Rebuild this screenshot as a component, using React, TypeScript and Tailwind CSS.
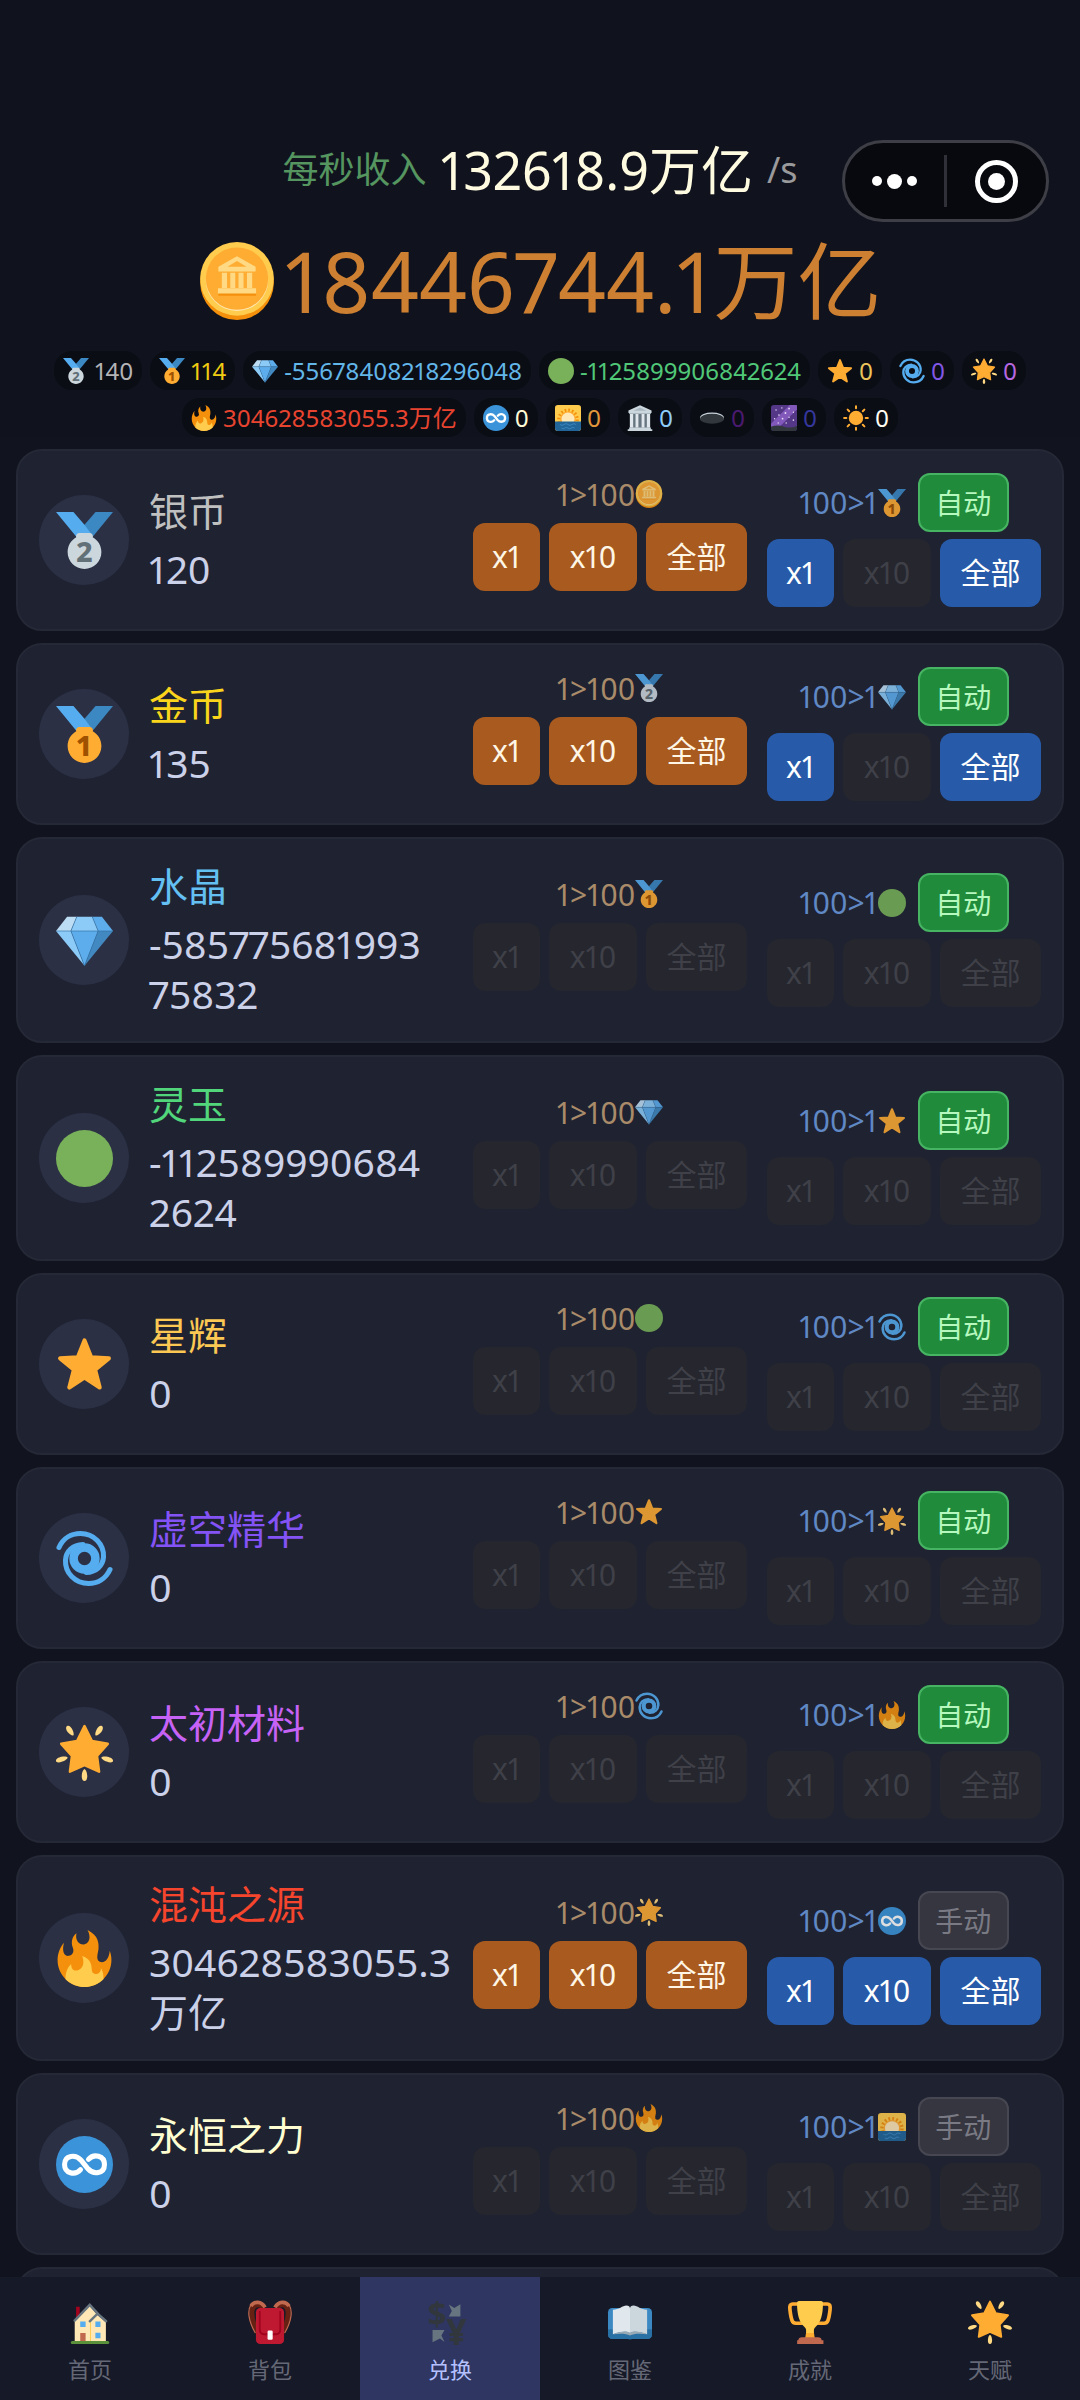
import type { ReactNode } from "react";

type IconName =
  | "coin" | "silver" | "gold" | "gem" | "jade" | "star" | "cyclone" | "glow" | "fire"
  | "infinity" | "sunrise" | "temple" | "hole" | "galaxy" | "sun"
  | "house" | "backpack" | "exchange" | "book" | "trophy";

const medal = (face: string, ink: string, n: string) => (
  <>
    <path fill="#55ACEE" d="M18 8l-7-8H0l14 17 11.521-4.75z" />
    <path fill="#3B88C3" d="M25 0l-7 8 5.39 7.312 1.227-1.489L36 0z" />
    <path
      fill={face}
      d="M23.205 16.026c.08-.217.131-.448.131-.693 0-1.104-.896-2-2-2h-6.667c-1.104 0-2 .896-2 2 0 .245.05.476.131.693-3.258 1.826-5.464 5.307-5.464 9.307C7.335 31.224 12.111 36 18.002 36s10.667-4.776 10.667-10.667c0-4-2.206-7.481-5.464-9.307z"
    />
    <text x="18" y="31.500" textAnchor="middle" fontSize="18" fontWeight="800" fill={ink}>{n}</text>
  </>
);

const drawings: Record<IconName, ReactNode> = {
  coin: (
    <>
      <ellipse cx="18" cy="18.6" rx="17" ry="17.4" fill="#F4900C" />
      <ellipse cx="18" cy="17" rx="17" ry="17" fill="#FFCC4D" />
      <circle cx="18" cy="17.4" r="14.4" fill="#FFE8B6" />
      <circle cx="18" cy="16.9" r="14.4" fill="#FFAC33" />
      <path fill="#F4900C" d="M9.4 23.4h17.4v1.4H9.4z" />
      <path fill="#FFD983" d="M18 6.6l8.6 4.8v2.2H9.4v-2.2zM11 14.2h2.4v7H11zm3.9 0h2.3v7h-2.3zm3.8 0H21v7h-2.3zm3.9 0H25v7h-2.4zM9.2 21.4h17.6v2.4H9.2z" />
      <path fill="#FFAC33" d="M18 8.8l4.4 2.6h-8.8z" />
    </>
  ),
  silver: medal("#CCD6DD", "#627077", "2"),
  gold: medal("#FFAC33", "#9E5200", "1"),
  gem: (
    <>
      <path fill="#BDDDF4" d="M7 3h6.1L9.4 12H0z" />
      <path fill="#5DADEC" d="M36 12L29 3h-6.1l3.7 9z" />
      <path fill="#4289C1" d="M26.6 12L18 34l18-22z" />
      <path fill="#8CCAF7" d="M9.4 12L18 34 0 12zM22.9 3h-9.8L9.4 12h17.2z" />
      <path fill="#5DADEC" d="M9.4 12L18 34l8.6-22z" />
      <path fill="none" stroke="#2F6FA3" strokeWidth=".4" d="M0 12h36M13.1 3L9.4 12 18 34l8.6-22-3.7-9" />
    </>
  ),
  jade: <circle cx="18" cy="18" r="18" fill="#78B159" />,
  star: (
    <path
      fill="#FFAC33" stroke="#FFAC33" strokeWidth="2.6" strokeLinejoin="round"
      d="M18 2.8l4.2 10.6 11.2.7-8.7 7.2 2.9 11.2L18 26.2l-9.6 6.3 2.9-11.2-8.7-7.2 11.2-.7z"
    />
  ),
  cyclone: (
    <g fill="none" stroke="#55ACEE" strokeLinecap="round" strokeWidth="3.2">
      <circle cx="18" cy="18" r="6.9" strokeWidth="5.4" />
      <path d="M1.9 11C4.6 5 10 2.2 15.4 2.2 24 2.2 30.4 9 30 17c-.3 5.4-4.6 9.6-11 9.8" />
      <path d="M34.1 25C31.4 31 26 33.8 20.6 33.8 12 33.8 5.6 27 6 19c.3-5.4 4.6-9.6 11-9.8" />
    </g>
  ),
  glow: (
    <>
      <path
        fill="#FFAC33" stroke="#FFAC33" strokeWidth="1.6" strokeLinejoin="round"
        d="M18 1.300l4.700 9.500 10 1.700-6.800 7.700 1.300 9.900L18 26l-9.200 4.100 1.300-9.900-6.800-7.700 10-1.700z"
      />
      <g fill="#FFD983">
        <path d="M7 1.200c1.300-.6 2.700.9 3.400 2.500.7 1.500 1 3 .6 3.500-.7.5-2.300-.6-3.500-2-1-1.300-1.700-3.300-.5-4z" />
        <path d="M29 1.200c-1.300-.6-2.700.9-3.400 2.500-.7 1.500-1 3-.6 3.500.7.5 2.300-.6 3.500-2 1-1.300 1.700-3.300.5-4z" />
        <path d="M0 23.400c-.2-1.300 1.600-2.300 3.400-2.700 1.800-.4 3.600-.2 3.900.4.2.8-1.500 1.900-3.300 2.600-1.800.7-3.700.9-4-.3z" />
        <path d="M36 23.400c.2-1.300-1.600-2.300-3.400-2.700-1.800-.4-3.600-.2-3.900.4-.2.800 1.500 1.900 3.300 2.600 1.800.7 3.700.9 4-.3z" />
        <path d="M18 36c-1.300 0-1.900-1.800-1.700-3.700.2-2 1-3.700 1.700-3.700s1.500 1.700 1.700 3.700c.2 1.900-.4 3.700-1.700 3.700z" />
      </g>
    </>
  ),
  fire: (
    <>
      <path fill="#F4900C" d="M35 19c0-2.062-.367-4.039-1.04-5.868-.46 5.389-3.333 8.157-6.335 6.868-2.812-1.208-.917-5.917-.777-8.164.236-3.809-.012-8.169-6.931-11.794 2.875 5.500.333 8.917-2.333 9.125-2.958.231-5.667-2.542-4.667-7.042-3.238 2.386-3.332 6.402-2.333 9 1.042 2.708-.042 4.958-2.583 5.208-2.840.280-4.418-3.041-2.963-8.333C2.520 10.965 1 14.805 1 19c0 9.389 7.611 17 17 17s17-7.611 17-17z" />
      <path fill="#FFCC4D" d="M28.394 23.999c.148 3.084-2.561 4.293-4.019 3.709-2.106-.843-1.541-2.291-2.083-5.291s-2.625-5.083-5.708-6c2.250 6.333-1.247 8.667-3.080 9.084-1.872.426-3.753-.001-3.968-4.007C7.352 23.668 6 26.676 6 30c0 .368.023.730.055 1.090C9.125 34.124 13.342 36 18 36s8.875-1.876 11.945-4.910c.032-.360.055-.722.055-1.090 0-2.187-.584-4.236-1.606-6.001z" />
    </>
  ),
  infinity: (
    <>
      <circle cx="18" cy="18" r="18" fill="#3B94D9" />
      <path
        fill="none" stroke="#fff" strokeWidth="3.2" strokeLinecap="round"
        d="M15.500 21.200C12 25.200 5.400 23.600 5.400 18c0-6 7-6.600 10.400-2.700l4.400 5.400C23.600 24.600 30.600 24 30.600 18c0-5.600-6.600-7.200-10.100-3.200"
      />
    </>
  ),
  sunrise: (
    <>
      <rect width="36" height="36" rx="4" fill="#FFCC4D" />
      <circle cx="18" cy="20" r="12.500" fill="none" stroke="#F4900C" strokeWidth="5" strokeDasharray="2.200 2.709" />
      <circle cx="18" cy="20" r="11" fill="#FFAC33" />
      <circle cx="18" cy="19.500" r="9" fill="#FFE8B6" />
      <path fill="#269" d="M0 23h36v9a4 4 0 0 1-4 4H4a4 4 0 0 1-4-4z" />
      <path fill="none" stroke="#3B88C3" strokeWidth="1.300" d="M7 27q2.750 2.500 5.500 0t5.500 0 5.500 0 5.500 0M9 32q2.250 2.200 4.500 0t4.500 0 4.500 0 4.500 0" />
    </>
  ),
  temple: (
    <>
      <path fill="#66757F" d="M4 10h28v22H4z" />
      <path fill="#CCD6DD" d="M18 .5L34 7.500V11H2V7.500zM1 33.500h34V36H1zM3 31h30v2.500H3z" />
      <path fill="#AAB8C2" d="M18 3.500L27 8H9zM3 11h30v1.500H3z" />
      <path fill="#E1E8ED" d="M4 12.500h4.500V31H4zm7.800 0h4V31h-4zm8.400 0h4V31h-4zm7.300 0H32V31h-4.500z" />
    </>
  ),
  hole: (
    <>
      <ellipse cx="18" cy="17.500" rx="16.500" ry="7" fill="#CCD6DD" />
      <ellipse cx="18" cy="19" rx="16.500" ry="7" fill="#31373D" />
    </>
  ),
  galaxy: (
    <>
      <rect width="36" height="36" rx="4" fill="#553788" />
      <path fill="#9266CC" d="M0 26L26 0h10v6L12 30H0z" opacity=".75" />
      <path fill="#31373D" d="M0 30q9-3 18 0t18-1v3a4 4 0 0 1-4 4H4a4 4 0 0 1-4-4z" />
      <g fill="#E6DCF7">
        <circle cx="7" cy="7" r="1" /><circle cx="15" cy="4" r="1" /><circle cx="25" cy="5" r="1.200" />
        <circle cx="31" cy="10" r="1" /><circle cx="20" cy="11" r="1.300" /><circle cx="11" cy="14" r="1.100" />
        <circle cx="5" cy="19" r="1" /><circle cx="16" cy="19" r="1.200" /><circle cx="25" cy="17" r="1" />
        <circle cx="31" cy="21" r="1.100" /><circle cx="10" cy="25" r="1" /><circle cx="21" cy="25" r="1" />
      </g>
    </>
  ),
  sun: (
    <>
      <circle cx="18" cy="18" r="10" fill="#FFAC33" />
      <path
        stroke="#FFAC33" strokeWidth="2.800" strokeLinecap="round"
        d="M18 1.600v3M18 31.400v3M1.600 18h3M31.400 18h3M6.400 6.400l2.200 2.200M27.400 27.400l2.200 2.200M6.400 29.600l2.200-2.200M27.400 8.600l2.200-2.200"
      />
    </>
  ),
  house: (
    <>
      <path fill="#A0041E" d="M6.600 5.500h3V15h-3z" />
      <path fill="#FFE8B6" d="M5.500 16.500L17.800 4.500l6 7.500 7.200 6v16H5.500z" />
      <path fill="none" stroke="#FFCC4D" strokeWidth=".8" d="M18.400 17v17" />
      <path fill="none" stroke="#66757F" strokeWidth="2" strokeLinecap="round" d="M5.400 16.800L17.800 4l7.500 8.200M17.800 17.400l6.400-6.200 7 6.200" />
      <path fill="#55ACEE" d="M10 17.500h4.400V22H10zM22.400 17.500h4.200V22h-4.200zM22.400 26.800h4.200v4.400h-4.200z" />
      <path fill="#C1694F" d="M10 27h4.400v7H10z" />
      <path fill="#5C913B" d="M3.500 33.500h29a1 1 0 0 1 0 2.500h-29a1 1 0 0 1 0-2.500z" />
    </>
  ),
  backpack: (
    <>
      <path fill="none" stroke="#662113" strokeWidth="4" d="M13 6C6 1 3 6 3.200 11c.1 6 2.300 11 5 16M23 6c7-5 10 0 9.800 5-.1 6-2.300 11-5 16" />
      <path fill="none" stroke="#C1694F" strokeWidth="3" d="M14 6C11 .800 5 .600 2.400 5M22 6c3-5.200 9-5.400 11.600-1" />
      <path fill="none" stroke="#C1694F" strokeWidth="1" d="M2.400 4C-1 9 .800 18 6 27M33.600 4C37 9 35.200 18 30 27" />
      <rect x="6.500" y="6.500" width="23" height="29.500" rx="3.500" fill="#BE1931" />
      <path fill="none" stroke="#A0041E" strokeWidth="1.500" d="M9.600 9v15c0 3 1 4 3.500 4h9.800c2.500 0 3.500-1 3.500-4V9" />
      <rect x="16" y="25" width="4.200" height="7.500" rx="1" fill="#fff" />
    </>
  ),
  exchange: (
    <>
      <text x="7.500" y="21" textAnchor="middle" fontSize="27" fontWeight="700" fill="#31373D">$</text>
      <text x="23.500" y="37" textAnchor="middle" fontSize="29" fontWeight="700" fill="#31373D">¥</text>
      <path fill="#66757F" d="M17 3.600l4.500 2.900 5-3.100v10.100H17L19.500 9zM13.500 34.400l-3.700-3-6.100 3.100v-10h9.800L11 29z" />
    </>
  ),
  book: (
    <>
      <rect x="0" y="6.500" width="36" height="25.500" rx="3.500" fill="#3B88C3" />
      <path fill="#269" d="M0 24v4.500A3.500 3.500 0 0 0 3.500 32h12.700q1.800 1.200 3.600 0h12.700a3.500 3.500 0 0 0 3.500-3.500V24z" opacity=".7" />
      <path fill="#E1E8ED" d="M4 8C9 8 12 4.500 15 4.500c2 0 3 1 3 2.500v20c-3-2-9-1-14 1z" />
      <path fill="#CCD6DD" d="M32 8c-5 0-8-3.500-11-3.500-2 0-3 1-3 2.500v20c3-2 9-1 14 1z" />
      <path fill="#99AAB5" d="M4 28c5-2 11-3.200 14-1 3-2.200 9-1 14 1-5-.6-11-.8-14 1-3-1.800-9-1.600-14-1z" />
    </>
  ),
  trophy: (
    <>
      <path fill="none" stroke="#FFAC33" strokeWidth="3" d="M9 3.300H4C1.500 3.300 1.300 5 1.600 8c.5 4.500 1 7 1.800 9 .6 1.500 1.500 2 3 2h6M27 3.300h5c2.500 0 2.700 1.700 2.400 4.700-.5 4.500-1 7-1.800 9-.6 1.500-1.500 2-3 2h-6" />
      <path fill="#FFAC33" d="M15.500 22h5l1.500 10h-8z" />
      <path fill="#FFCC4D" d="M9 .800h18c1 0 1.600.7 1.600 1.700C28.600 12 27 18 22.500 22c-1.500 1.400-1.500 3-1.500 5h-6c0-2 0-3.600-1.500-5C9 18 7.400 12 7.400 2.500c0-1 .6-1.700 1.600-1.700z" />
      <path fill="#C1694F" d="M11.500 30.500h13c2 0 3 1 3 2.500H29v3H7.500v-3h1c0-1.500 1-2.500 3-2.500z" />
    </>
  ),
};

function Icon({ name, className }: { name: IconName; className: string }) {
  return (
    <svg viewBox="0 0 36 36" aria-hidden="true" className={`shrink-0 overflow-visible ${className}`}>
      {drawings[name]}
    </svg>
  );
}

const chips: { icon: IconName; value: string; color: string }[] = [
  { icon: "silver", value: "140", color: "text-[#b4b4b6]" },
  { icon: "gold", value: "114", color: "text-[#f0cc12]" },
  { icon: "gem", value: "-55678408218296048", color: "text-[#62b6e8]" },
  { icon: "jade", value: "-1125899906842624", color: "text-[#50c878]" },
  { icon: "star", value: "0", color: "text-[#eac45a]" },
  { icon: "cyclone", value: "0", color: "text-[#8157e6]" },
  { icon: "glow", value: "0", color: "text-[#b768e0]" },
  { icon: "fire", value: "304628583055.3万亿", color: "text-[#e8442f]" },
  { icon: "infinity", value: "0", color: "text-[#fffbd6]" },
  { icon: "sunrise", value: "0", color: "text-[#e2983a]" },
  { icon: "temple", value: "0", color: "text-[#8fcdf8]" },
  { icon: "hole", value: "0", color: "text-[#4a1a70]" },
  { icon: "galaxy", value: "0", color: "text-[#34379c]" },
  { icon: "sun", value: "0", color: "text-[#fffdf2]" },
];

type Flags = [boolean, boolean, boolean];
type Currency = {
  icon: IconName; name: string; color: string; value: ReactNode;
  down: IconName; downOn: Flags; up: IconName; upOn: Flags; auto: boolean;
};

const none: Flags = [false, false, false];
const all: Flags = [true, true, true];

const currencies: Currency[] = [
  { icon: "silver", name: "银币", color: "text-[#c0c0c0]", value: "120", down: "coin", downOn: all, up: "gold", upOn: [true, false, true], auto: true },
  { icon: "gold", name: "金币", color: "text-[#fad51c]", value: "135", down: "silver", downOn: all, up: "gem", upOn: [true, false, true], auto: true },
  { icon: "gem", name: "水晶", color: "text-[#64c0f2]", value: <>-585775681993<wbr />75832</>, down: "gold", downOn: none, up: "jade", upOn: none, auto: true },
  { icon: "jade", name: "灵玉", color: "text-[#52d67c]", value: <>-112589990684<wbr />2624</>, down: "gem", downOn: none, up: "star", upOn: none, auto: true },
  { icon: "star", name: "星辉", color: "text-[#fac853]", value: "0", down: "jade", downOn: none, up: "cyclone", upOn: none, auto: true },
  { icon: "cyclone", name: "虚空精华", color: "text-[#8453f5]", value: "0", down: "star", downOn: none, up: "glow", upOn: none, auto: true },
  { icon: "glow", name: "太初材料", color: "text-[#c662f5]", value: "0", down: "cyclone", downOn: none, up: "fire", upOn: none, auto: true },
  { icon: "fire", name: "混沌之源", color: "text-[#f5452d]", value: "304628583055.3万亿", down: "glow", downOn: all, up: "infinity", upOn: all, auto: false },
  { icon: "infinity", name: "永恒之力", color: "text-[#ffffd2]", value: "0", down: "fire", downOn: none, up: "sunrise", upOn: none, auto: false },
];

const amounts = [
  { label: "x1", width: "w-[67px]" },
  { label: "x10", width: "w-[88px]" },
  { label: "全部", width: "w-[101px]" },
];

function AmountButtons({ on, tone }: { on: Flags; tone: string }) {
  return (
    <div className="flex gap-[9px]">
      {amounts.map((a, i) => (
        <button
          key={a.label}
          type="button"
          disabled={!on[i]}
          className={`h-[68px] rounded-xl text-[30px] leading-[40px] ${a.width} ${on[i] ? tone : "bg-[#25262e] text-[#3f4048]"}`}
        >
          {a.label}
        </button>
      ))}
    </div>
  );
}

function CurrencyCard({ c }: { c: Currency }) {
  return (
    <li className="flex shrink-0 items-center rounded-[26px] border-2 border-[#252836] bg-[#1f2231] px-[21px] py-[22px]">
      <div className="grid size-[90px] shrink-0 place-items-center rounded-full bg-[#2c3045]">
        <Icon name={c.icon} className="size-[57px]" />
      </div>
      <div className="ml-[20px] min-w-0 flex-1 pr-4">
        <h2 className={`text-[39px] leading-[50px] ${c.color}`}>{c.name}</h2>
        <p className="mt-2 text-[39px] leading-[50px] break-words text-[#cbd1e8]">{c.value}</p>
      </div>
      <div className="flex shrink-0 gap-[20px]">
        <div className="flex flex-col items-center gap-2">
          <div className="flex h-[42px] items-center text-[30px] text-[#a98b69]">
            1&gt;100
            <Icon name={c.down} className="size-[28px] opacity-85" />
          </div>
          <AmountButtons on={c.downOn} tone="bg-[#a85a1f] text-[#fff6e6]" />
        </div>
        <div className="flex flex-col items-center gap-[7px]">
          <div className="flex items-center text-[30px] text-[#5f88c4]">
            100&gt;1
            <Icon name={c.up} className="size-[28px] opacity-85" />
            <button
              type="button"
              aria-pressed={c.auto}
              className={`ml-3 h-[59px] w-[91px] rounded-xl border-2 text-[28px] leading-[36px] ${
                c.auto ? "border-[#46b462] bg-[#1f8b3b] text-[#b6f8be]" : "border-[#464751] bg-[#35363f] text-[#7a7a84]"
              }`}
            >
              {c.auto ? "自动" : "手动"}
            </button>
          </div>
          <AmountButtons on={c.upOn} tone="bg-[#275aa9] text-white" />
        </div>
      </div>
    </li>
  );
}

const tabs: { icon: IconName; label: string }[] = [
  { icon: "house", label: "首页" },
  { icon: "backpack", label: "背包" },
  { icon: "exchange", label: "兑换" },
  { icon: "book", label: "图鉴" },
  { icon: "trophy", label: "成就" },
  { icon: "glow", label: "天赋" },
];

export default function App() {
  return (
    <div className="relative flex h-screen flex-col overflow-hidden bg-[#11141e] font-['Noto_Sans','Noto_Sans_CJK_SC',sans-serif] proportional-nums">
      <header className="flex flex-col items-center bg-[#10131d] px-10 pt-[138px]">
        <div className="flex items-center gap-[14px] leading-[64px]">
          <span className="text-[36px] text-[#559560]">每秒收入</span>
          <strong className="text-[52px] font-normal text-[#fffbe0]">132618.9万亿</strong>
          <span className="text-[36px] text-[#9a9a9c]">/s</span>
        </div>
        <div className="mt-[34px] flex items-center gap-[8px]">
          <Icon name="coin" className="size-[78px]" />
          <h1 className="text-[84px] leading-[90px] text-[#cd7f32]">18446744.1万亿</h1>
        </div>
        <ul className="mt-[25px] flex flex-wrap justify-center gap-2">
          {chips.map((c) => (
            <li key={c.icon} className="flex h-[39px] items-center gap-1.5 rounded-[18px] bg-[#0b0d15] px-[9px]">
              <Icon name={c.icon} className="size-[26px]" />
              <span className={`text-[24px] leading-[36px] ${c.color}`}>{c.value}</span>
            </li>
          ))}
        </ul>
      </header>

      <div className="absolute top-[140px] right-[31px] flex h-[82px] w-[207px] items-center rounded-full border-[3px] border-[#3e3f46] bg-[#08090f]">
        <button type="button" aria-label="更多" className="flex flex-1 items-center justify-center gap-[5px]">
          <span className="size-[10px] rounded-full bg-white" />
          <span className="size-[15px] rounded-full bg-white" />
          <span className="size-[10px] rounded-full bg-white" />
        </button>
        <span className="h-[52px] w-[3px] bg-[#303138]" />
        <button type="button" aria-label="关闭" className="flex flex-1 justify-center">
          <span className="grid size-[43px] place-items-center rounded-full border-[5px] border-white">
            <span className="size-[17px] rounded-full bg-white" />
          </span>
        </button>
      </div>

      <main className="min-h-0 flex-1 overflow-hidden px-4 pt-3">
        <ul className="flex flex-col gap-3">
          {currencies.map((c) => (
            <CurrencyCard key={c.icon} c={c} />
          ))}
          <li className="h-[182px] shrink-0 rounded-[26px] border-2 border-[#252836] bg-[#1f2231]" />
        </ul>
      </main>

      <nav className="grid shrink-0 grid-cols-6 bg-[#161927]">
        {tabs.map((t) => {
          const active = t.label === "兑换";
          return (
            <a
              key={t.label}
              href="#"
              aria-current={active ? "page" : undefined}
              className={`flex h-[123px] flex-col items-center gap-[10px] pt-[23px] text-[22px] leading-[30px] ${
                active ? "bg-[#2e3661] text-[#b5c1ff]" : "text-[#656876]"
              }`}
            >
              <Icon name={t.icon} className="size-[44px]" />
              {t.label}
            </a>
          );
        })}
      </nav>
    </div>
  );
}
